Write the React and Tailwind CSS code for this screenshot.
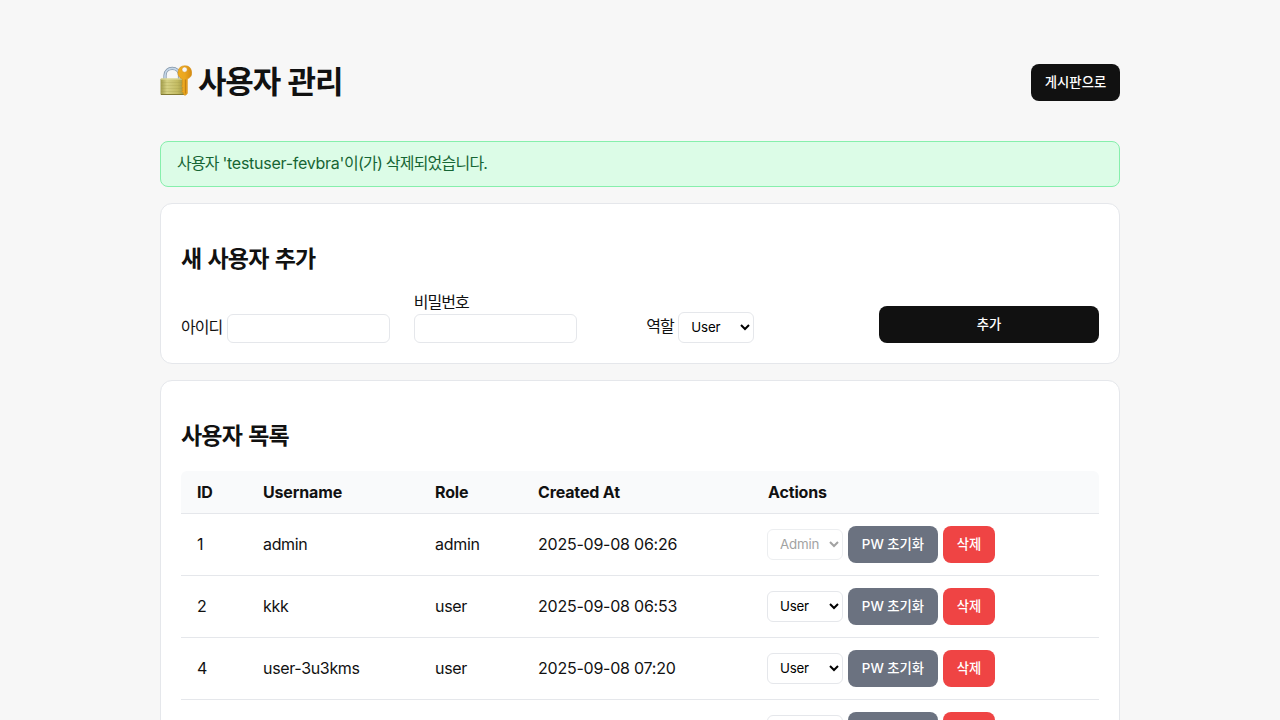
import React from "react";

const users = [
  { id: 1, name: "admin", role: "admin", created: "2025-09-08 06:26" },
  { id: 2, name: "kkk", role: "user", created: "2025-09-08 06:53" },
  { id: 4, name: "user-3u3kms", role: "user", created: "2025-09-08 07:20" },
  { id: 5, name: "", role: "user", created: "" },
];

function LockIcon() {
  return (
    <svg viewBox="0 0 32 32" className="block h-8 w-8 shrink-0">
      <defs>
        <linearGradient id="body" x1="0" y1="0" x2="1" y2="0">
          <stop offset="0" stopColor="#a09a48" />
          <stop offset=".25" stopColor="#d6d184" />
          <stop offset=".65" stopColor="#c3bb62" />
          <stop offset="1" stopColor="#8f8638" />
        </linearGradient>
        <linearGradient id="key" x1="0" y1="0" x2="1" y2="0">
          <stop offset="0" stopColor="#f0ac20" />
          <stop offset=".5" stopColor="#eba71f" />
          <stop offset="1" stopColor="#d48a12" />
        </linearGradient>
      </defs>
      <path d="M5 15V10.500C5 1 19.500 1 19.500 10.500V15" fill="none" stroke="#8295a8" strokeWidth="3.200" />
      <path d="M5 15V10.500C5 1 19.500 1 19.500 10.500V15" fill="none" stroke="#c4d6e8" strokeWidth="1.700" />
      <rect x="0.500" y="13.500" width="26" height="16.500" rx="1" fill="url(#body)" />
      <path d="M1 14H26" stroke="#e2dfa5" />
      <path d="M1 17.500H26M1 20.500H26M1 23.500H26M1 26.500H26" stroke="#9b9446" strokeWidth=".7" opacity=".3" />
      <path d="M1 29.500H26" stroke="#817932" />
      <path fillRule="evenodd" fill="url(#key)" stroke="#d58d13" strokeWidth=".5" d="M24.600 0.700a6.900 6.900 0 0 1 2.800 13.300V28.500L25 30.500 23.300 29V27.600L21.700 26.500 23.200 25.200 21.700 24 23.200 22.700 21.700 21.500 22.300 20V14A6.900 6.900 0 0 1 24.600 0.700ZM24.600 2a2.600 2.600 0 1 0 0 5.200a2.600 2.600 0 0 0 0-5.200Z" />
      <path d="M25.400 14.500V28.500" stroke="#b67310" strokeWidth=".8" />
    </svg>
  );
}

function RoleSelect({ value, disabled }) {
  return (
    <select
      defaultValue={value}
      disabled={disabled}
      className="h-[31px] w-[76px] shrink-0 rounded-md border border-[#e5e7eb] bg-white pb-px pl-2 text-[13.333px] tracking-[-0.2px] text-black disabled:text-[#7b7b7b] disabled:opacity-70"
    >
      <option value="user">User</option>
      <option value="admin">Admin</option>
    </select>
  );
}

function Heading({ children }) {
  return <h2 className="text-[23px] leading-9 font-bold tracking-[-0.8px] [word-spacing:1.500px]">{children}</h2>;
}

export default function App() {
  return (
    <div className="h-screen overflow-hidden bg-[#f7f7f7] pt-16 font-['Inter','Noto_Sans_CJK_KR',sans-serif] text-base text-[#111]">
      <main className="mx-auto w-[960px]">
        <header className="flex h-[37px] items-start justify-between">
          <h1 className="flex h-[34px] items-center text-[31px] leading-[34px] font-bold tracking-[-1.2px] [word-spacing:1.500px]">
            <LockIcon />
            <span className="ml-1.5 pt-px">사용자 관리</span>
          </h1>
          <button className="h-[37px] w-[89px] rounded-lg bg-[#111] pt-px text-[13.333px] font-medium text-white">게시판으로</button>
        </header>

        <div className="mt-10 flex h-[46px] items-center rounded-lg border border-[#86efac] bg-[#dcfce7] px-4 pb-0.5 whitespace-pre text-[#166534]">
          <span className="tracking-[-0.8px]">사용자 </span>
          <span className="tracking-[-0.26px]">'testuser-fevbra'</span>
          <span className="tracking-[-0.78px]">이(가) 삭제되었습니다.</span>
        </div>

        <section className="mt-4 h-[161px] rounded-xl border border-[#e5e7eb] bg-white px-5 pt-[37px]">
          <Heading>새 사용자 추가</Heading>
          <form className="mt-[13px] grid grid-cols-4 items-end gap-x-[12.660px]">
            <label className="flex items-center gap-[5px] tracking-[-0.95px]">
              <span className="w-[41px] shrink-0 pb-1 whitespace-nowrap">아이디</span>
              <input className="h-[29px] w-[163px] shrink-0 rounded-md border border-[#e5e7eb] bg-white px-2" />
            </label>
            <label className="flex flex-col tracking-[-0.95px]">
              <span className="leading-6">비밀번호</span>
              <input type="password" className="h-[29px] w-[163px] rounded-md border border-[#e5e7eb] bg-white px-2" />
            </label>
            <label className="flex items-center gap-[5px] tracking-[-0.95px]">
              <span className="w-[27px] shrink-0 pb-1 whitespace-nowrap">역할</span>
              <RoleSelect value="user" />
            </label>
            <button type="button" className="h-[37px] rounded-lg bg-[#111] text-[13.333px] font-medium text-white">추가</button>
          </form>
        </section>

        <section className="mt-4 h-[560px] rounded-xl border border-[#e5e7eb] bg-white px-5 pt-[37px]">
          <Heading>사용자 목록</Heading>
          <table className="mt-[17px] w-full table-fixed border-separate border-spacing-0 text-left">
            <colgroup>
              <col className="w-[66px]" />
              <col className="w-[172px]" />
              <col className="w-[103px]" />
              <col className="w-[230px]" />
              <col />
            </colgroup>
            <thead>
              <tr className="h-[43px]">
                {["ID", "Username", "Role", "Created At", "Actions"].map((label) => (
                  <th key={label} className="border-b border-[#e5e7eb] bg-[#f9fafb] px-4 font-bold tracking-[-0.15px] first:rounded-tl-md last:rounded-tr-md">
                    {label}
                  </th>
                ))}
              </tr>
            </thead>
            <tbody>
              {users.map((user) => (
                <tr key={user.id} className="h-[62px]">
                  <td className="border-b border-[#e5e7eb] px-4 pb-0.5">{user.name && user.id}</td>
                  <td className="border-b border-[#e5e7eb] px-4 pb-0.5 tracking-[-0.33px]">{user.name}</td>
                  <td className="border-b border-[#e5e7eb] px-4 pb-0.5 tracking-[-0.3px]">{user.name && user.role}</td>
                  <td className="border-b border-[#e5e7eb] px-4 pb-0.5 tracking-[-0.23px]">{user.created}</td>
                  <td className="border-b border-[#e5e7eb] pr-4 pl-[15px]">
                    <div className="flex items-center gap-[5px]">
                      <RoleSelect value={user.role} disabled={user.role === "admin"} />
                      <button className="h-[37px] w-[90px] rounded-lg bg-[#6b7280] text-[13.333px] font-medium text-white">PW 초기화</button>
                      <button className="h-[37px] w-[52px] rounded-lg bg-[#ef4444] text-[13.333px] font-medium text-white">삭제</button>
                    </div>
                  </td>
                </tr>
              ))}
            </tbody>
          </table>
        </section>
      </main>
    </div>
  );
}
